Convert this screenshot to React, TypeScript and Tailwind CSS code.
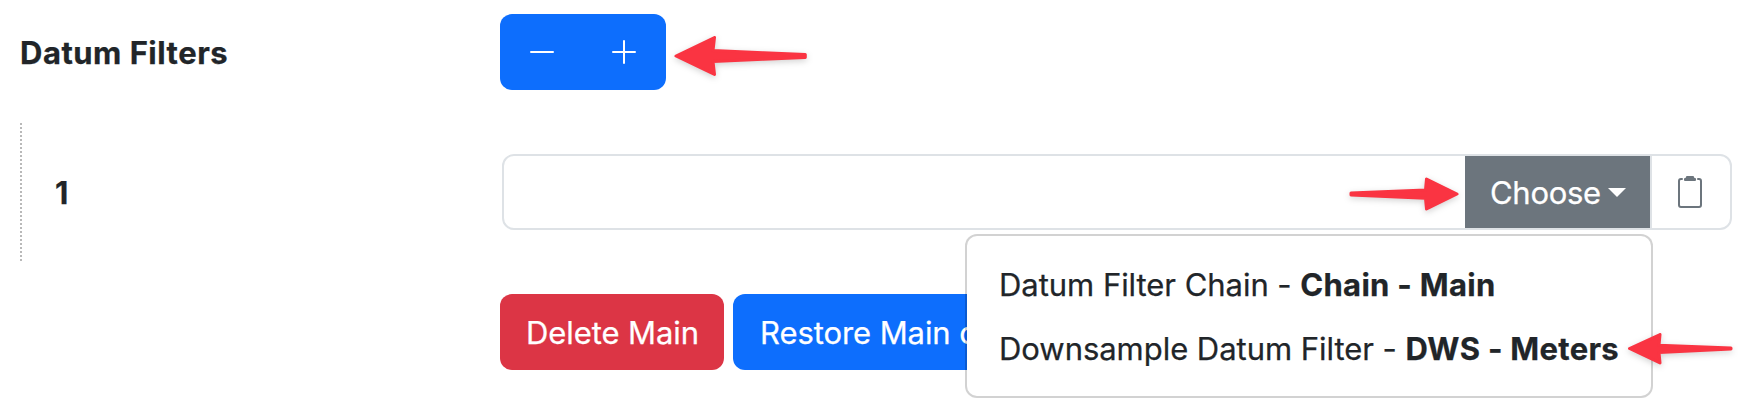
import { BsClipboard2, BsDashLg, BsPlusLg } from "react-icons/bs";

type ArrowProps = { className: string; viewBox: string; d: string };

function Arrow({ className, viewBox, d }: ArrowProps) {
  return (
    <svg
      className={`absolute overflow-visible drop-shadow-[0_2px_3px_rgba(0,0,0,0.18)] ${className}`}
      viewBox={viewBox}
      fill="#fa3442"
      stroke="#fa3442"
      strokeWidth="3"
      strokeLinejoin="round"
    >
      <path d={d} />
    </svg>
  );
}

const menuItems = [
  { type: "Datum Filter Chain", name: "Chain - Main" },
  { type: "Downsample Datum Filter", name: "DWS - Meters" },
];

export default function App() {
  return (
    <main className="relative h-[420px] w-[1750px] overflow-hidden bg-white pt-[14px] pl-5 font-['Inter',sans-serif] text-[31px] leading-[49px] text-[#212529] [-webkit-text-stroke:0.25px]">
      <div className="flex h-[76px]">
        <div className="w-[480px] pt-[14px] font-bold tracking-[0.5px]">Datum Filters</div>
        <div className="relative flex h-[76px] w-[166px] items-center rounded-xl bg-[#0d6efd] text-white">
          <button className="flex w-[84px] justify-center" aria-label="Remove">
            <BsDashLg className="size-8" />
          </button>
          <button className="flex w-[80px] justify-center" aria-label="Add">
            <BsPlusLg className="size-8" />
          </button>
          <Arrow
            className="top-[20px] left-[174px] h-[44px] w-[134px]"
            viewBox="0 0 134 44"
            d="M2 22 40.5 3.5 39 16.5 131.3 20.5V23.5L39 27.5 40.5 40.5Z"
          />
        </div>
      </div>

      <div className="mt-[33px] flex h-[138px] border-l-2 border-dotted border-[#b9b9b9] pt-[31px]">
        <div className="w-[480px] pt-[14px] pl-[33px] font-bold">1</div>
        <div className="relative flex h-[76px] w-[1230px] rounded-xl border-2 border-[#dee2e6]">
          <div className="relative flex-1">
            <Arrow
              className="top-[18px] right-[5px] h-[40px] w-[114px]"
              viewBox="0 0 114 40"
              d="M111 20 80.5 5 79.5 16 5 19V21L79.5 24.3 80.5 35Z"
            />
          </div>
          <button className="flex w-[185px] items-center bg-[#6c757d] pl-[25px] text-white">
            <span className="w-[118px] text-left tracking-[-0.3px]">Choose</span>
            <span className="border-x-[9.5px] border-t-[9.5px] border-x-transparent border-t-white" />
          </button>
          <button className="flex w-[80px] items-center border-l-2 border-[#dee2e6] pl-[22px] text-[#6c757d]" aria-label="Paste">
            <BsClipboard2 className="size-8" />
          </button>

          <div className="absolute top-[78px] left-[461px] z-10 h-[164px] w-[688px] rounded-xl border-2 border-black/[.175] bg-white bg-clip-padding py-4">
            {menuItems.map((item) => (
              <div key={item.name} className="h-16 pt-2 pl-8 whitespace-nowrap">
                <span className="tracking-[-0.04px]">{item.type} - </span>
                <b className="tracking-[0.3px]">{item.name}</b>
              </div>
            ))}
            <Arrow
              className="top-[92px] left-[659px] h-[40px] w-[110px]"
              viewBox="0 0 110 40"
              d="M3.5 20.5 34 6.5 33 17.3 105 20V21L33 24.5 34 35Z"
            />
          </div>
        </div>
      </div>

      <div className="mt-[33px] ml-[480px] flex h-[76px] gap-[9px] tracking-[-0.08px] text-white">
        <button className="w-[224px] rounded-xl bg-[#dc3545] pl-[26px] text-left">Delete Main</button>
        <button className="w-[500px] rounded-xl bg-[#0d6efd] pl-[27px] text-left">Restore Main c</button>
      </div>
    </main>
  );
}
